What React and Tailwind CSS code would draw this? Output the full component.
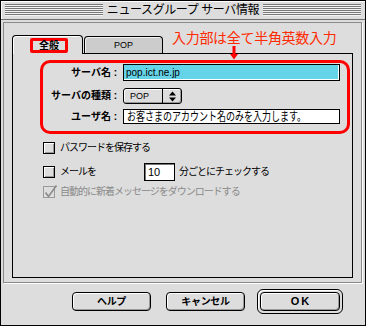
import React from "react";

const stripes =
  "h-[12px] flex-1 bg-[repeating-linear-gradient(to_bottom,#777777_0px,#777777_1px,#f4f4f4_1px,#f4f4f4_2px)]";

const bevel = "shadow-[inset_1px_1px_0_#ffffff,inset_-1px_-1px_0_#9a9a9a]";

const CheckBox = ({ checked = false, disabled = false }) => (
  <span
    className={
      disabled
        ? "relative block w-[12px] h-[12px] shrink-0 border border-[#9a9a9a] bg-[#dddddd]"
        : "relative block w-[12px] h-[12px] shrink-0 border border-black bg-[#dddddd] shadow-[inset_1px_1px_0_#ffffff,inset_-1px_-1px_0_#9a9a9a]"
    }
  >
    {checked && (
      <svg className="absolute -left-px -top-[3px]" width="16" height="16" viewBox="0 0 16 16">
        <path d="M2.5 8.5 L5.5 12.5 L13.5 1.5" fill="none" stroke="#8a8a8a" strokeWidth="1.6" />
      </svg>
    )}
  </span>
);

const Button = ({ label, wide }) => (
  <div
    className={`flex items-center justify-center border border-black rounded-[4px] bg-[#dddddd] ${bevel} ${
      wide ? "w-full h-full" : "w-[79px] h-[19px]"
    }`}
  >
    <span className="text-[10px] font-bold leading-none text-black tracking-[-0.3px]">{label}</span>
  </div>
);

const App = () => {
  return (
    <div className="w-[366px] h-[326px] bg-[#dddddd] border border-black flex flex-col relative overflow-hidden font-['Liberation_Sans','Noto_Sans_CJK_JP',sans-serif] text-black">
      {/* title bar */}
      <div className="h-[19px] shrink-0 flex items-center px-[4px] gap-[3px] border-b border-[#6f6f6f] shadow-[inset_1px_1px_0_#ffffff]">
        <div className={stripes} />
        <span className="text-[12px] leading-none tracking-[-0.4px] px-[1px]">ニュースグループ サーバ情報</span>
        <div className={stripes} />
      </div>

      {/* content frame */}
      <div className="ml-[2px] mt-[2px] w-[359px] h-[261px] shrink-0 border border-[#8a8a8a] shadow-[1px_1px_0_#ffffff] pl-[8px] pt-[11px] flex flex-col">
        <div className="flex items-end h-[19px]">
          <div className="relative z-10 -mb-px w-[71px] h-[19px] border border-b-0 border-black rounded-t-[4px] bg-[#dddddd] shadow-[inset_1px_1px_0_#ffffff] pl-[17px] pt-[2px]">
            <div className="w-[38px] h-[15px] border-[3px] border-[#ff0000] rounded-[2px] flex items-center justify-center">
              <span className="text-[10px] font-bold leading-none">全般</span>
            </div>
          </div>
          <div className="w-[79px] h-[17px] ml-px border border-b-0 border-black rounded-t-[4px] bg-[#cccccc] shadow-[inset_1px_1px_0_#f2f2f2] flex items-center justify-center">
            <span className="text-[9px] leading-none">POP</span>
          </div>
        </div>

        <div className="relative w-[341px] h-[225px] border border-black bg-[#dddddd] pt-[10px] flex flex-col">
          {/* annotation box */}
          <div className="absolute left-[27px] top-[6px] w-[310px] h-[74px] border-[3px] border-[#ff0000] rounded-[10px]" />

          <div className="flex items-center h-[17px]">
            <span className="w-[104px] text-right text-[10px] font-bold leading-none">サーバ名 :</span>
            <div className="ml-[6px] w-[217px] h-[17px] border border-black bg-[#66d4e8] shadow-[inset_-1px_-1px_0_#ffffff] flex items-center pl-[2px]">
              <span className="text-[10px] leading-none">pop.ict.ne.jp</span>
            </div>
          </div>

          <div className="flex items-center h-[16px] mt-[7px]">
            <span className="w-[104px] text-right text-[10px] font-bold leading-none">サーバの種類 :</span>
            <div className={`ml-[6px] w-[59px] h-[16px] border border-black rounded-[3px] bg-[#dddddd] flex ${bevel}`}>
              <div className="flex-1 flex items-center pl-[6px]">
                <span className="text-[9px] leading-none">POP</span>
              </div>
              <div className="w-[19px] border-l border-black flex items-center justify-center">
                <svg width="9" height="11" viewBox="0 0 9 11">
                  <path d="M4.5 0.5 L8 4.5 L1 4.5 Z" fill="#000" />
                  <path d="M1 6.5 L8 6.5 L4.5 10.5 Z" fill="#000" />
                </svg>
              </div>
            </div>
          </div>

          <div className="flex items-center h-[15px] mt-[5px]">
            <span className="w-[104px] text-right text-[10px] font-bold leading-none">ユーザ名 :</span>
            <div className="ml-[6px] w-[217px] h-[15px] border border-black bg-white overflow-hidden flex items-center pl-[3px]">
              <span className="inline-block origin-left scale-x-[0.75] whitespace-nowrap text-[12px] leading-none">
                お客さまのアカウント名のみを入力します。
              </span>
            </div>
          </div>

          <div className="flex items-center h-[12px] mt-[18px] pl-[30px]">
            <CheckBox />
            <span className="ml-[5px] text-[10px] leading-none tracking-[-1px]">パスワードを保存する</span>
          </div>

          <div className="flex items-center h-[18px] mt-[9px] pl-[30px]">
            <CheckBox />
            <span className="ml-[5px] w-[84px] text-[10px] leading-none tracking-[-1px]">メールを</span>
            <div className="w-[31px] h-[18px] border border-black bg-white shadow-[inset_1px_1px_0_#777777] flex items-center pl-[3px]">
              <span className="text-[11px] leading-none">10</span>
            </div>
            <span className="ml-[4px] text-[10px] leading-none tracking-[-1px]">分ごとにチェックする</span>
          </div>

          <div className="flex items-center h-[12px] mt-[5px] pl-[30px]">
            <CheckBox checked disabled />
            <span className="ml-[5px] text-[10px] leading-none tracking-[-1px] text-[#8a8a8a]">
              自動的に新着メッセージをダウンロードする
            </span>
          </div>
        </div>
      </div>

      {/* buttons */}
      <div className="flex items-center h-[25px] mt-[6px] pl-[71px]">
        <Button label="ヘルプ" />
        <div className="ml-[15px]">
          <Button label="キャンセル" />
        </div>
        <div className="ml-[12px] w-[86px] h-[25px] border border-black rounded-[6px] p-[2px] bg-[#dddddd] shadow-[inset_1px_1px_0_#ffffff]">
          <div className="w-full h-full flex items-center justify-center border border-black rounded-[4px] bg-[#dddddd] shadow-[inset_1px_1px_0_#ffffff,inset_-1px_-1px_0_#9a9a9a]">
            <span className="text-[11px] font-bold leading-none tracking-[2px] pl-[2px]">OK</span>
          </div>
        </div>
      </div>

      {/* red annotation */}
      <span className="absolute left-[171px] top-[28px] text-[14px] leading-[16px] tracking-[-0.3px] text-[#ff2a00] font-['Noto_Sans_CJK_JP',sans-serif] whitespace-nowrap">
        入力部は全て半角英数入力
      </span>
      <svg className="absolute left-[228px] top-[45px]" width="10" height="14" viewBox="0 0 10 14">
        <rect x="3.5" y="0" width="3" height="9" fill="#ff0000" />
        <path d="M1 8 L9 8 L5 13.5 Z" fill="#ff0000" />
      </svg>
    </div>
  );
};

export default App;
